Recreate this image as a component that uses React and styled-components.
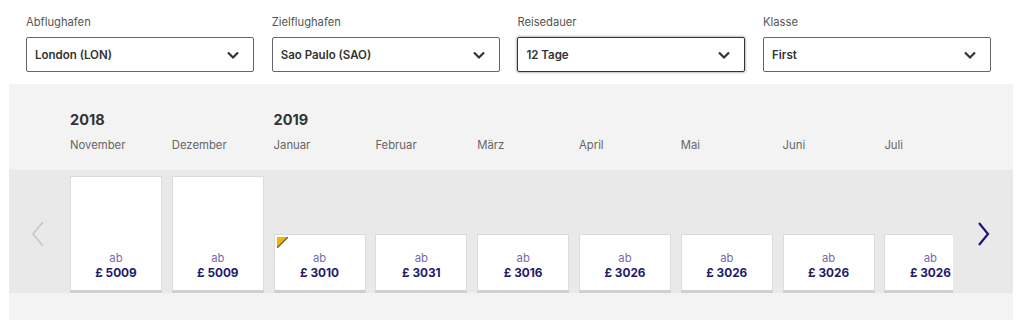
import React from 'react';
import styled, { createGlobalStyle } from 'styled-components';

const Global = createGlobalStyle`
  body {
    margin: 0;
    background: #fff;
    font-family: Inter, "Liberation Sans", sans-serif;
  }
`;

const Page = styled.div`
  width: 1024px;
  height: 327px;
  overflow: hidden;
`;

const Filters = styled.div`
  display: grid;
  grid-template-columns: repeat(4, 228px);
  column-gap: 17.7px;
  padding: 15px 0 0 26px;
`;

const Field = styled.div`
  display: flex;
  flex-direction: column;
`;

const Label = styled.div`
  font-size: 11.2px;
  line-height: 15px;
  color: #555;
  margin-bottom: 7px;
`;

const Select = styled.div`
  box-sizing: border-box;
  height: 35px;
  display: flex;
  align-items: center;
  justify-content: space-between;
  padding: 0 13px 0 8px;
  border: 1px solid ${p => (p.$focused ? '#333' : '#666')};
  border-radius: 2px;
  box-shadow: ${p => (p.$focused ? '0 0 2px 1px rgba(0,0,0,0.25)' : 'none')};
  font-size: 11.5px;
  font-weight: 600;
  color: #333;
`;

const Panel = styled.div`
  margin: 12px 0 0 9px;
  width: 1004px;
  background: #f3f3f3;
`;

const Timeline = styled.div`
  height: 86px;
  box-sizing: border-box;
  padding: 27px 0 0 61px;
`;

const Track = styled.div`
  display: grid;
  grid-template-columns: repeat(9, 92px);
  column-gap: 9.8px;
`;

const Year = styled.div`
  font-size: 14.5px;
  line-height: 18px;
  font-weight: 700;
  color: #333;
  height: 18px;
`;

const Month = styled.div`
  font-size: 11.3px;
  line-height: 15px;
  color: #666;
  margin-top: 9px;
`;

const Band = styled.div`
  height: 123px;
  background: #e9e9e9;
  display: flex;
  align-items: stretch;
`;

const Arrow = styled.div`
  width: ${p => p.$w}px;
  display: flex;
  align-items: center;
  justify-content: ${p => p.$side};
  padding: 4px ${p => p.$pad}px 0;
  box-sizing: border-box;
`;

const Viewport = styled.div`
  width: 883px;
  overflow: hidden;
  padding-top: 6px;
  display: flex;
`;

const Cards = styled.div`
  display: grid;
  grid-template-columns: repeat(9, 92px);
  column-gap: 9.8px;
  align-items: end;
`;

const Card = styled.div`
  position: relative;
  box-sizing: border-box;
  height: ${p => (p.$tall ? 117 : 59)}px;
  background: #fff;
  border: 1px solid #dcdcdc;
  border-bottom: 3px solid #cfcfcf;
  display: flex;
  flex-direction: column;
  align-items: center;
  justify-content: flex-end;
  padding-bottom: 9px;
`;

const Ab = styled.div`
  font-size: 11.3px;
  line-height: 14px;
  color: #7669ad;
`;

const Price = styled.div`
  font-size: 11.8px;
  line-height: 16px;
  font-weight: 700;
  color: #241a6c;
`;

const Corner = styled.svg`
  position: absolute;
  top: 2px;
  left: 2px;
`;

const Footer = styled.div`
  height: 27px;
`;

const Chevron = () => (
  <svg width="14" height="10" viewBox="0 0 14 10">
    <polyline points="2,2.5 7,7.5 12,2.5" fill="none" stroke="#333" strokeWidth="2.2" />
  </svg>
);

const filters = [
  { label: 'Abflughafen', value: 'London (LON)' },
  { label: 'Zielflughafen', value: 'Sao Paulo (SAO)' },
  { label: 'Reisedauer', value: '12 Tage', focused: true },
  { label: 'Klasse', value: 'First' },
];

const months = [
  { year: '2018', name: 'November' },
  { name: 'Dezember' },
  { year: '2019', name: 'Januar' },
  { name: 'Februar' },
  { name: 'März' },
  { name: 'April' },
  { name: 'Mai' },
  { name: 'Juni' },
  { name: 'Juli' },
];

const prices = [
  { price: '5009', tall: true },
  { price: '5009', tall: true },
  { price: '3010', flag: true },
  { price: '3031' },
  { price: '3016' },
  { price: '3026' },
  { price: '3026' },
  { price: '3026' },
  { price: '3026' },
];

export default function App() {
  return (
    <Page>
      <Global />
      <Filters>
        {filters.map(f => (
          <Field key={f.label}>
            <Label>{f.label}</Label>
            <Select $focused={f.focused}>
              <span>{f.value}</span>
              <Chevron />
            </Select>
          </Field>
        ))}
      </Filters>
      <Panel>
        <Timeline>
          <Track>
            {months.map(m => (
              <div key={m.name}>
                <Year>{m.year}</Year>
                <Month>{m.name}</Month>
              </div>
            ))}
          </Track>
        </Timeline>
        <Band>
          <Arrow $w={61} $side="flex-start" $pad={22}>
            <svg width="14" height="26" viewBox="0 0 14 26">
              <polyline points="12,1 2,13 12,25" fill="none" stroke="#c6c6c6" strokeWidth="1.6" />
            </svg>
          </Arrow>
          <Viewport>
            <Cards>
              {prices.map((p, i) => (
                <Card key={i} $tall={p.tall}>
                  {p.flag && (
                    <Corner width="11" height="11" viewBox="0 0 11 11">
                      <polygon points="0,0 11,0 0,11" fill="#f6b400" />
                      <line x1="11" y1="0" x2="0" y2="11" stroke="#6b6040" strokeWidth="1.4" />
                    </Corner>
                  )}
                  <Ab>ab</Ab>
                  <Price>£ {p.price}</Price>
                </Card>
              ))}
            </Cards>
          </Viewport>
          <Arrow $w={60} $side="flex-end" $pad={22}>
            <svg width="14" height="26" viewBox="0 0 14 26">
              <polyline points="2,2 11,13 2,24" fill="none" stroke="#1f1669" strokeWidth="2.2" />
            </svg>
          </Arrow>
        </Band>
        <Footer />
      </Panel>
    </Page>
  );
}
